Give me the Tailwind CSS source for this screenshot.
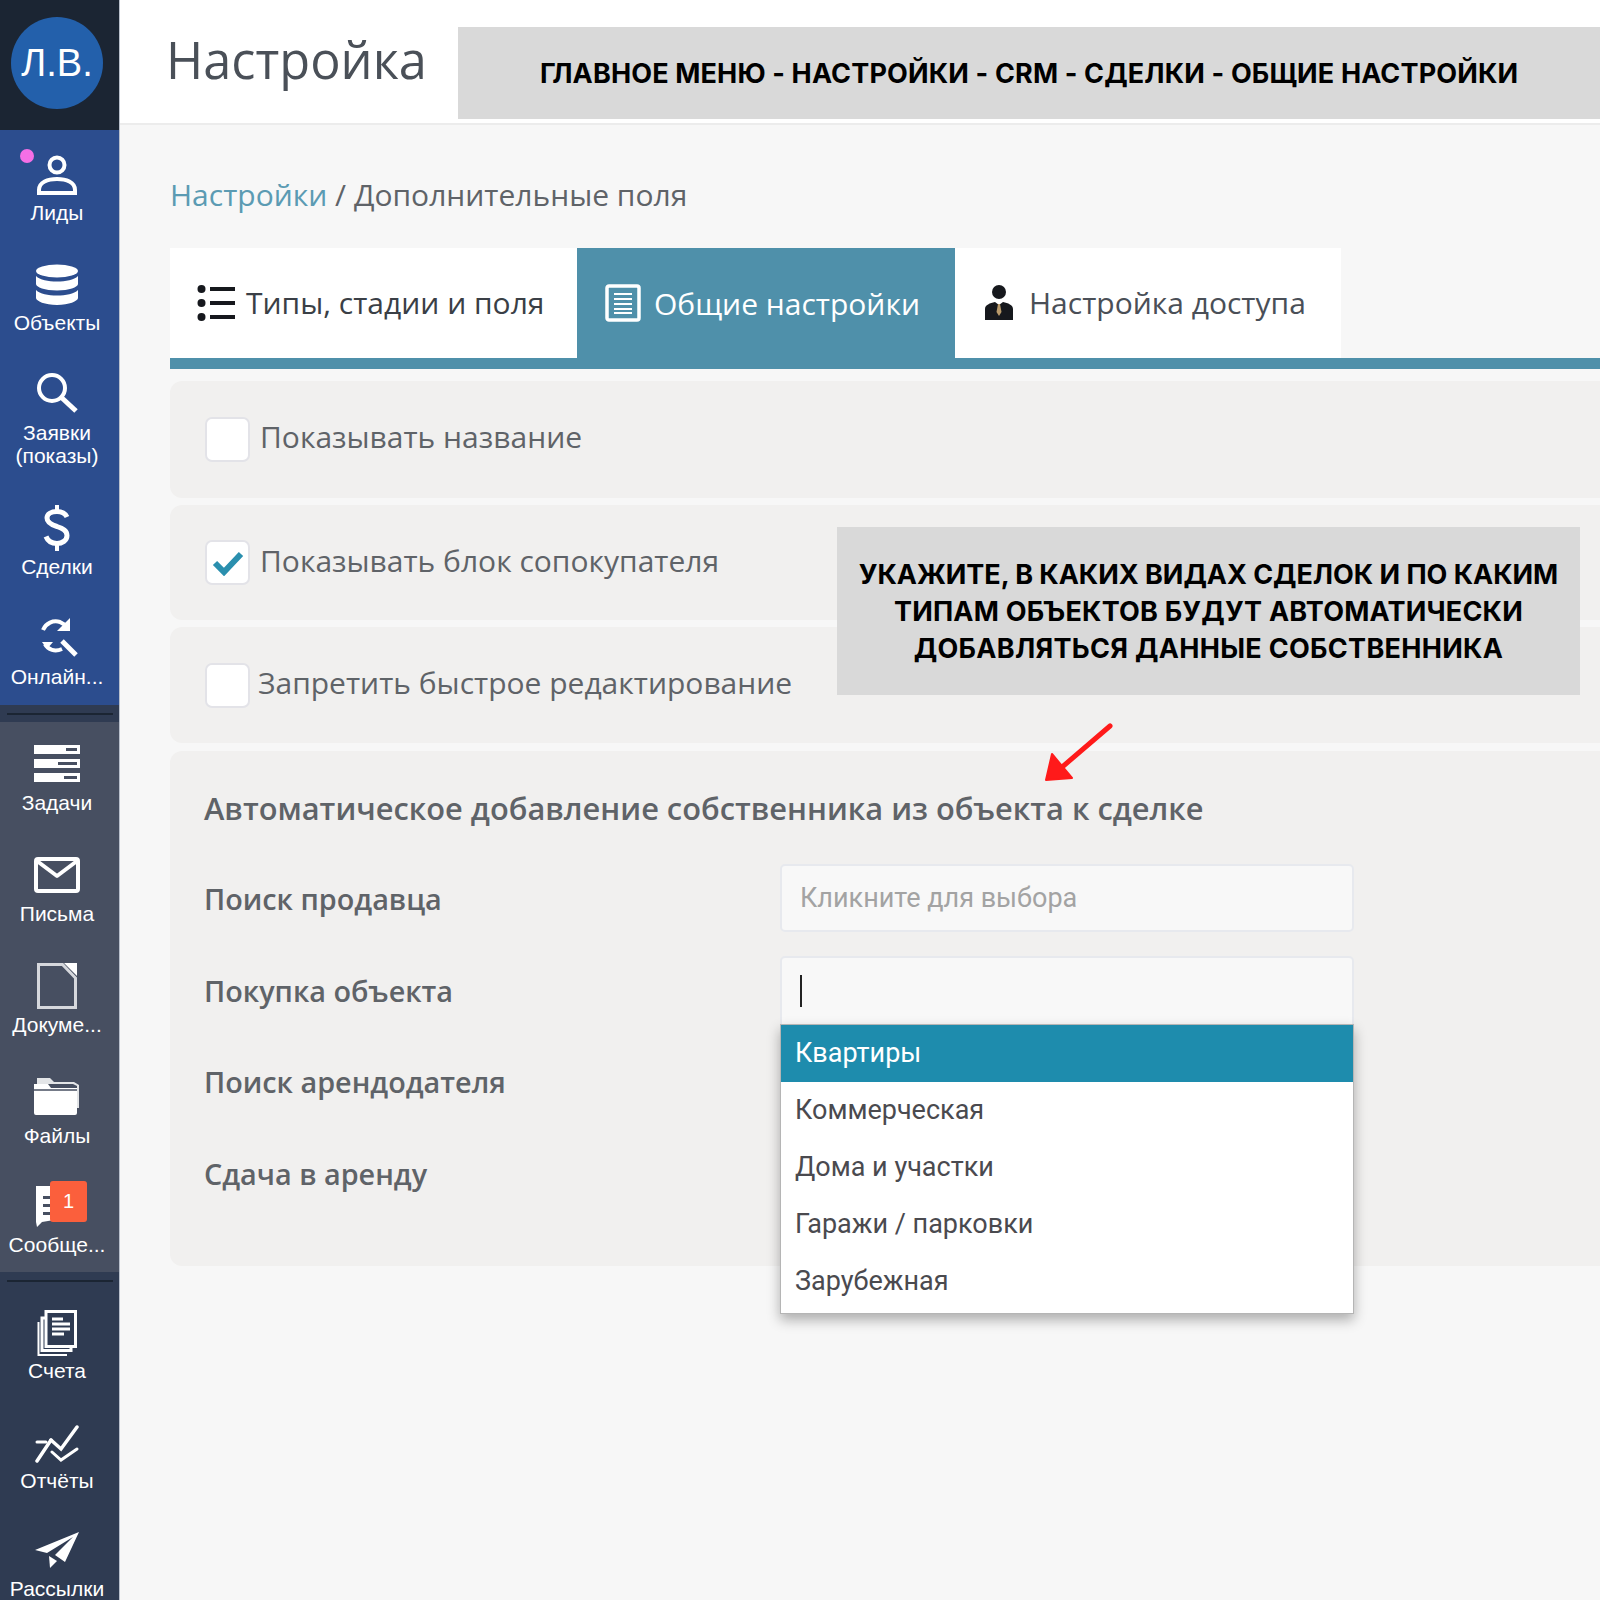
<!DOCTYPE html>
<html lang="ru">
<head>
<meta charset="utf-8">
<title>Настройка</title>
<script src="https://cdn.jsdelivr.net/npm/@tailwindcss/browser@4"></script>
</head>
<body class="m-0">
<div class="relative flex h-[1600px] w-[1600px] overflow-hidden bg-[#f7f7f7] font-['Open_Sans',sans-serif]">

  <!-- SIDEBAR -->
  <aside class="flex w-[120px] shrink-0 flex-col overflow-hidden border-r border-[#b9c0cc] font-['Liberation_Sans',sans-serif] text-[21px] leading-[23px] whitespace-nowrap text-white">
    <div class="flex h-[130px] shrink-0 items-center justify-center bg-[#1b2533] pr-[5px] pb-[4px]">
      <div class="flex h-[92px] w-[92px] items-center justify-center rounded-full bg-[#2360ab] text-[38px] font-normal">Л.В.</div>
    </div>

    <div class="relative flex h-[575px] shrink-0 flex-col bg-[#2c4d8e] pt-[22px] pr-[5px]">
      <span class="absolute left-[20px] top-[19px] h-[14px] w-[14px] rounded-full bg-[#f56fe6]"></span>
      <div class="flex h-[110px] flex-col items-center">
        <div class="flex h-[46px] items-center">
          <svg width="44" height="42" viewBox="0 0 44 42" fill="none" stroke="white" stroke-width="4"><circle cx="22" cy="11" r="7.5"/><path d="M4 36c0-8 9-11 18-11s18 3 18 11v3H4z"/></svg>
        </div>
        <div class="mt-[3px] text-center">Лиды</div>
      </div>
      <div class="flex h-[108px] flex-col items-center">
        <div class="flex h-[46px] items-center">
          <svg width="44" height="42" viewBox="0 0 44 42" fill="white"><ellipse cx="22" cy="7" rx="21" ry="6.5"/><path d="M1 12c4 4 12 5.500 21 5.500S39 16 43 12v8c0 3-9 6.500-21 6.500S1 23 1 20z"/><path d="M1 26c4 4 12 5.500 21 5.500S39 30 43 26v8c0 3-9 7-21 7S1 37 1 34z"/></svg>
        </div>
        <div class="mt-[3px] text-center">Объекты</div>
      </div>
      <div class="flex h-[135px] flex-col items-center">
        <div class="flex h-[46px] items-center">
          <svg width="42" height="42" viewBox="0 0 42 42" fill="none" stroke="white" stroke-width="4"><circle cx="16" cy="16" r="13"/><path d="M26 26l14 13" stroke-width="5"/></svg>
        </div>
        <div class="mt-[5px] text-center">Заявки<br>(показы)</div>
      </div>
      <div class="flex h-[110px] flex-col items-center">
        <div class="flex h-[46px] items-center">
          <svg width="28" height="46" viewBox="0 0 28 46" fill="none" stroke="white" stroke-width="5"><path d="M24 12C22 8 18 6.500 14 6.500 8 6.500 4 9 4 13c0 5 5 7 10 8.500 6 2 10 4 10 9 0 5-5 8-10 8-5 0-9-2-11-7"/><path d="M14 0v7M14 38v8" stroke-width="4"/></svg>
        </div>
        <div class="mt-[4px] text-center">Сделки</div>
      </div>
      <div class="flex flex-col items-center">
        <div class="flex h-[46px] items-center">
          <svg width="42" height="42" viewBox="0 0 42 42" fill="none" stroke="white" stroke-width="4"><path d="M7 13C10 6 17 3 24 5l7 4"/><path d="M34 1v13H21" fill="white" stroke="none"/><path d="M6 25h11l-6 7z" fill="white" stroke="none"/><path d="M9 27c3 6 10 8 17 5"/><path d="M26 24l14 14" stroke-width="5"/></svg>
        </div>
        <div class="mt-[4px] text-center">Онлайн...</div>
      </div>
    </div>

    <div class="flex h-[17px] shrink-0 items-center justify-center bg-[#2f3b52]"><div class="h-[2px] w-[106px] bg-[#1b2533]"></div></div>

    <div class="relative flex h-[550px] shrink-0 flex-col bg-[#474f61] pt-[19px] pr-[5px]">
      <div class="flex h-[111px] flex-col items-center">
        <div class="flex h-[46px] items-center">
          <svg width="46" height="38" viewBox="0 0 46 38" fill="white"><path d="M0 0h46v9H0zM0 14h46v9H0zM0 28h46v9H0z"/><path d="M32 3h11v3H32zM24 17h19v3H24zM30 31h13v3H30z" fill="#474f61"/></svg>
        </div>
        <div class="mt-[4px] text-center">Задачи</div>
      </div>
      <div class="flex h-[111px] flex-col items-center">
        <div class="flex h-[46px] items-center">
          <svg width="46" height="36" viewBox="0 0 46 36" fill="none" stroke="white" stroke-width="4" stroke-linejoin="round"><rect x="2" y="2" width="42" height="32" rx="2"/><path d="M3 4l20 15L43 4"/></svg>
        </div>
        <div class="mt-[4px] text-center">Письма</div>
      </div>
      <div class="flex h-[111px] flex-col items-center">
        <div class="flex h-[46px] items-center">
          <svg width="40" height="46" viewBox="0 0 40 46" fill="none" stroke="#d6d8dd" stroke-width="3"><path d="M1.500 1.500h24L38.500 15v29.500h-37z"/><path d="M27 0l13 13V0z" fill="white" stroke="none"/></svg>
        </div>
        <div class="mt-[4px] text-center">Докуме...</div>
      </div>
      <div class="flex h-[110px] flex-col items-center">
        <div class="flex h-[46px] items-center">
          <svg width="46" height="38" viewBox="0 0 46 38" fill="white"><path d="M3 0h13l4 4h20l5 3v23h-2V8L39 6H3z" opacity=".85"/><path d="M0 6h14l3 4h26v25a2 2 0 0 1-2 2H2a2 2 0 0 1-2-2z"/><path d="M0 12h43" stroke="#474f61" stroke-width="1.500"/></svg>
        </div>
        <div class="mt-[4px] text-center">Файлы</div>
      </div>
      <div class="relative flex flex-col items-center">
        <div class="flex h-[46px] items-center">
          <svg class="mr-[26px]" width="20" height="42" viewBox="0 0 20 42" fill="white"><path d="M2 0h18v34L8 36l-5 5-1-5z"/><path d="M9 10h11v3H9zM9 18h11v3H9zM9 26h11v3H9z" fill="#474f61"/></svg>
        </div>
        <div class="mt-[3px] text-center">Сообще...</div>
        <div class="absolute left-[50px] top-[-3px] flex h-[41px] w-[37px] items-center justify-center rounded-[3px] bg-[#fb5f3c] text-[20px]">1</div>
      </div>
    </div>

    <div class="flex h-[18px] shrink-0 items-center justify-center bg-[#2f3b52]"><div class="h-[2px] w-[106px] bg-[#1b2533]"></div></div>

    <div class="flex h-[310px] shrink-0 flex-col bg-[#2f3b52] pt-[20px] pr-[5px]">
      <div class="flex h-[112px] flex-col items-center">
        <div class="flex h-[46px] items-center">
          <svg width="40" height="46" viewBox="0 0 40 46" fill="none" stroke="white" stroke-width="3"><path d="M9 1.500h29.500v35H9z"/><path d="M9 8H5v32.500h29V37"/><path d="M1.500 12v33H30" stroke-width="2"/><path d="M15 9h11M15 14h18M15 19h18M15 24h12" stroke-width="3"/></svg>
        </div>
        <div class="mt-[3px] text-center">Счета</div>
      </div>
      <div class="flex h-[108px] flex-col items-center">
        <div class="flex h-[46px] items-center">
          <svg width="44" height="38" viewBox="0 0 44 38" fill="none" stroke="white" stroke-width="3.500" stroke-linecap="round"><path d="M16 15l10 9L42 2"/><path d="M2 36l14-21"/><path d="M2 17h9M17 27l9 8 16-11" stroke-width="3"/></svg>
        </div>
        <div class="mt-[2px] text-center">Отчёты</div>
      </div>
      <div class="flex flex-col items-center">
        <div class="flex h-[46px] items-center">
          <svg width="44" height="38" viewBox="0 0 44 38" fill="white"><path d="M0 18L44 0 30 30 20 23 38 5 12 21z"/><path d="M14 24l1 12 7-7z"/></svg>
        </div>
        <div class="mt-[3px] text-center">Рассылки</div>
      </div>
    </div>
  </aside>

  <!-- MAIN -->
  <main class="flex min-w-0 flex-1 flex-col">
    <header class="flex h-[125px] shrink-0 items-start border-b-2 border-[#ececec] bg-white">
      <h1 class="ml-[46px] mt-[26px] w-[292px] text-[50.500px] leading-[68px] font-normal text-[#4a5058]">Настройка</h1>
      <div class="mt-[27px] flex h-[92px] flex-1 items-center bg-[#d9d9d9] pt-[3px] pl-[82px] font-['Inter',sans-serif] text-[27px] font-bold tracking-[0.15px] whitespace-nowrap text-black">ГЛАВНОЕ МЕНЮ - НАСТРОЙКИ - CRM - СДЕЛКИ - ОБЩИЕ НАСТРОЙКИ</div>
    </header>

    <div class="flex flex-col pl-[50px]">
      <div class="mt-[50px] text-[30px] leading-[40px] text-[#5f6368]"><span class="text-[#5b9bb3]">Настройки</span> / Дополнительные поля</div>

      <!-- tabs -->
      <div class="mt-[33px] flex h-[121px] border-b-[11px] border-[#4f90aa] text-[30px]">
        <div class="flex h-[110px] w-[407px] items-center gap-[11px] bg-white pl-[27px] text-[#3a3f46]">
          <svg width="38" height="38" viewBox="0 0 38 38" fill="#16181d"><circle cx="4.500" cy="5" r="4"/><circle cx="4.500" cy="19" r="4"/><circle cx="4.500" cy="33" r="4"/><path d="M13 3h25v4H13zM13 17h25v4H13zM13 31h25v4H13z"/></svg>
          <span class="pb-[2px]">Типы, стадии и поля</span>
        </div>
        <div class="flex h-[121px] w-[378px] items-start gap-[13px] bg-[#4f90aa] pl-[28px] text-white">
          <svg class="mt-[36px]" width="36" height="38" viewBox="0 0 36 38" fill="none" stroke="white"><rect x="2" y="2" width="32" height="34" rx="2" stroke-width="3.500"/><path d="M9 10h18M9 15h18M9 20h18M9 25h18M9 29h18" stroke-width="2"/></svg>
          <span class="mt-[33px]">Общие настройки</span>
        </div>
        <div class="flex h-[110px] w-[386px] items-center gap-[15px] bg-white pl-[29px] text-[#4a4f57]">
          <svg width="30" height="36" viewBox="0 0 30 36" fill="#16181d"><circle cx="15" cy="7" r="7"/><path d="M1 35V24c0-4 5-6 10-7l4 3 4-3c5 1 10 3 10 7v11z"/><path d="M14 19h2l1.500 8-2.500 4-2.500-4z" fill="#b99a6b"/></svg>
          <span class="pb-[2px]">Настройка доступа</span>
        </div>
      </div>

      <!-- panels -->
      <section class="mt-[12px] flex h-[117px] items-center gap-[10px] rounded-l-[12px] bg-[#f1f0ef] pl-[35px] text-[30px] text-[#5f6368]">
        <span class="h-[45px] w-[45px] rounded-[7px] border-2 border-[#e3e3e8] bg-white"></span>
        <span class="pb-[6px]">Показывать название</span>
      </section>
      <section class="mt-[7px] flex h-[115px] items-center gap-[10px] rounded-l-[12px] bg-[#f1f0ef] pl-[35px] text-[30px] text-[#5f6368]">
        <span class="flex h-[45px] w-[45px] items-center justify-center rounded-[7px] border-2 border-[#e3e3e8] bg-white">
          <svg width="32" height="26" viewBox="0 0 32 26" fill="none" stroke="#2a8fae" stroke-width="6"><path d="M3 13l9 9L29 4"/></svg>
        </span>
        <span class="pb-[4px]">Показывать блок сопокупателя</span>
      </section>
      <section class="mt-[7px] flex h-[116px] items-center gap-[8px] rounded-l-[12px] bg-[#f1f0ef] pl-[35px] text-[30px] text-[#5f6368]">
        <span class="h-[45px] w-[45px] rounded-[7px] border-2 border-[#e3e3e8] bg-white"></span>
        <span class="pb-[6px]">Запретить быстрое редактирование</span>
      </section>

      <section class="mt-[8px] flex h-[515px] flex-col rounded-l-[12px] bg-[#f1f0ef] pl-[34px] text-[#5f6368]">
        <h2 class="mt-[34px] text-[30.800px] leading-[46px] font-semibold">Автоматическое добавление собственника из объекта к сделке</h2>
        <div class="relative mt-[33px] w-[1150px]">
          <div class="flex h-[92px] items-start text-[28.800px] font-semibold">
            <span class="w-[576px] pt-[13px]">Поиск продавца</span>
            <div class="h-[68px] w-[574px] rounded-[5px] border-2 border-[#e7e9ee] bg-[#f8f8f8] pl-[18px] font-['Roboto',sans-serif] text-[27px] leading-[64px] font-normal text-[#a3a3a3]">Кликните для выбора</div>
          </div>
          <div class="flex h-[92px] items-start text-[28.800px] font-semibold">
            <span class="w-[576px] pt-[13px]">Покупка объекта</span>
            <div class="flex h-[70px] w-[574px] items-center rounded-t-[5px] border-2 border-[#e7e9ee] bg-[#f8f8f8] pl-[18px]"><span class="h-[32px] w-[2px] bg-[#222]"></span></div>
          </div>
          <div class="flex h-[92px] text-[28.800px] font-semibold"><span class="pt-[12px]">Поиск арендодателя</span></div>
          <div class="flex h-[92px] text-[28.800px] font-semibold"><span class="pt-[12px]">Сдача в аренду</span></div>

          <ul class="absolute left-[576px] top-[160px] w-[574px] border border-[#b5b5b5] bg-white pb-[3px] font-['Roboto',sans-serif] text-[27px] leading-[57px] text-[#4a4a4f] shadow-[0_6px_12px_rgba(0,0,0,0.3)]">
            <li class="bg-[#1e8cad] pl-[14px] text-white">Квартиры</li>
            <li class="pl-[14px]">Коммерческая</li>
            <li class="pl-[14px]">Дома и участки</li>
            <li class="pl-[14px]">Гаражи / парковки</li>
            <li class="pl-[14px]">Зарубежная</li>
          </ul>
        </div>
      </section>
    </div>
  </main>

  <!-- annotation overlays -->
  <div class="absolute left-[837px] top-[527px] flex h-[168px] w-[743px] items-center justify-center bg-[#d9d9d9] text-center font-['Inter',sans-serif] text-[27px] leading-[37px] font-bold text-black">
    <div>
      <div class="tracking-[-0.04px]">УКАЖИТЕ, В КАКИХ ВИДАХ СДЕЛОК И ПО КАКИМ</div>
      <div class="tracking-[0.2px]">ТИПАМ ОБЪЕКТОВ БУДУТ АВТОМАТИЧЕСКИ</div>
      <div class="tracking-[0.3px]">ДОБАВЛЯТЬСЯ ДАННЫЕ СОБСТВЕННИКА</div>
    </div>
  </div>
  <svg class="absolute left-[1040px] top-[720px]" width="76" height="66" viewBox="0 0 76 66" fill="none"><path d="M70 6L14 54" stroke="#ff1a1a" stroke-width="5" stroke-linecap="round"/><path d="M12 34L6 60l26-2z" fill="#ff1a1a" stroke="#ff1a1a" stroke-width="2" stroke-linejoin="round"/></svg>
</div>
</body>
</html>
